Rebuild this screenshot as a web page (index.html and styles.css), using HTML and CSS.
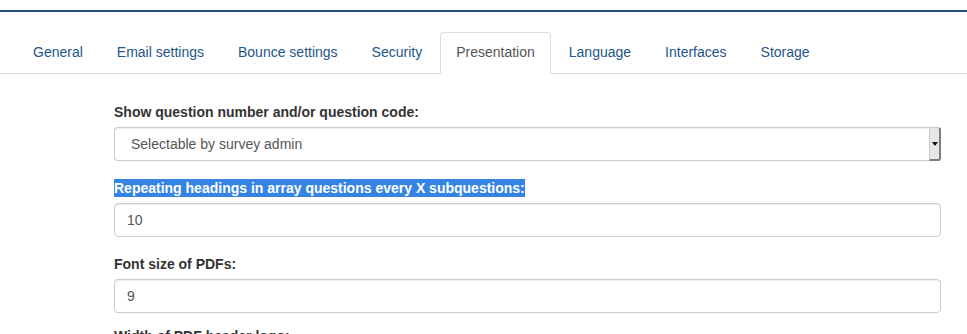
FILE: index.html
```html
<!DOCTYPE html>
<html lang="en">
<head>
  <meta charset="UTF-8">
  <title>Global settings</title>
  <link rel="stylesheet" href="styles.css">
</head>
<body>
  <div class="topbar"></div>
  <ul class="nav-tabs">
    <li><a href="#">General</a></li>
    <li><a href="#">Email settings</a></li>
    <li><a href="#">Bounce settings</a></li>
    <li><a href="#">Security</a></li>
    <li class="active"><a href="#">Presentation</a></li>
    <li><a href="#">Language</a></li>
    <li><a href="#">Interfaces</a></li>
    <li><a href="#">Storage</a></li>
  </ul>
  <div class="tab-content">
    <div class="form-group">
      <label>Show question number and/or question code:</label>
      <div class="select-box">
        <span class="select-value">Selectable by survey admin</span>
        <span class="select-btn"><span class="caret"></span></span>
      </div>
    </div>
    <div class="form-group">
      <label><span class="selected-text">Repeating headings in array questions every X subquestions:</span></label>
      <div class="text-box">10</div>
    </div>
    <div class="form-group pdf-font">
      <label>Font size of PDFs:</label>
      <div class="text-box">9</div>
    </div>
    <div class="form-group">
      <label>Width of PDF header logo:</label>
      <div class="text-box">75</div>
    </div>
  </div>
</body>
</html>
```

FILE: styles.css
```css
* {
  margin: 0;
  padding: 0;
  box-sizing: border-box;
}
body {
  font-family: 'Liberation Sans', Arial, sans-serif;
  font-size: 14px;
  line-height: 20px;
  color: #333;
  background: #fff;
  overflow: hidden;
}
.topbar {
  margin-top: 10px;
  height: 2px;
  background: #234f7e;
}
.nav-tabs {
  list-style: none;
  display: flex;
  margin-top: 20px;
  padding-left: 17px;
  border-bottom: 1px solid #ddd;
}
.nav-tabs li {
  margin-right: 2px;
  margin-bottom: -1px;
}
.nav-tabs a {
  display: block;
  padding: 9px 15px 11px;
  border: 1px solid transparent;
  border-radius: 4px 4px 0 0;
  color: #23568a;
  text-decoration: none;
}
.nav-tabs .active a {
  color: #555;
  background: #fff;
  border-color: #ddd #ddd transparent;
}
.tab-content {
  padding: 28px 26px 0 114px;
}
.form-group {
  margin-bottom: 17px;
}
.form-group.pdf-font {
  margin-bottom: 13px;
}
label {
  display: block;
  font-weight: bold;
  margin-bottom: 5px;
}
.selected-text {
  background: #3584e4;
  color: #fff;
  padding: 1px 0;
}
.select-box, .text-box {
  display: flex;
  align-items: center;
  height: 34px;
  border: 1px solid #ccc;
  border-radius: 4px;
  box-shadow: inset 0 1px 1px rgba(0, 0, 0, 0.075);
  color: #555;
  background: #fff;
}
.text-box {
  padding: 0 12px;
}
.select-box {
  justify-content: space-between;
  padding-left: 16px;
  border-right: none;
}
.select-btn {
  width: 12px;
  height: 34px;
  margin-top: -1px;
  margin-bottom: -1px;
  display: flex;
  align-items: center;
  justify-content: center;
  background: #e6e6e6;
  border: 1px solid #c8c8c8;
  border-right: 2px solid #7c7c7c;
  border-bottom: 2px solid #7c7c7c;
  border-radius: 0 3px 3px 0;
}
.caret {
  width: 0;
  height: 0;
  border-left: 3px solid transparent;
  border-right: 3px solid transparent;
  border-top: 4px solid #111;
}
```
